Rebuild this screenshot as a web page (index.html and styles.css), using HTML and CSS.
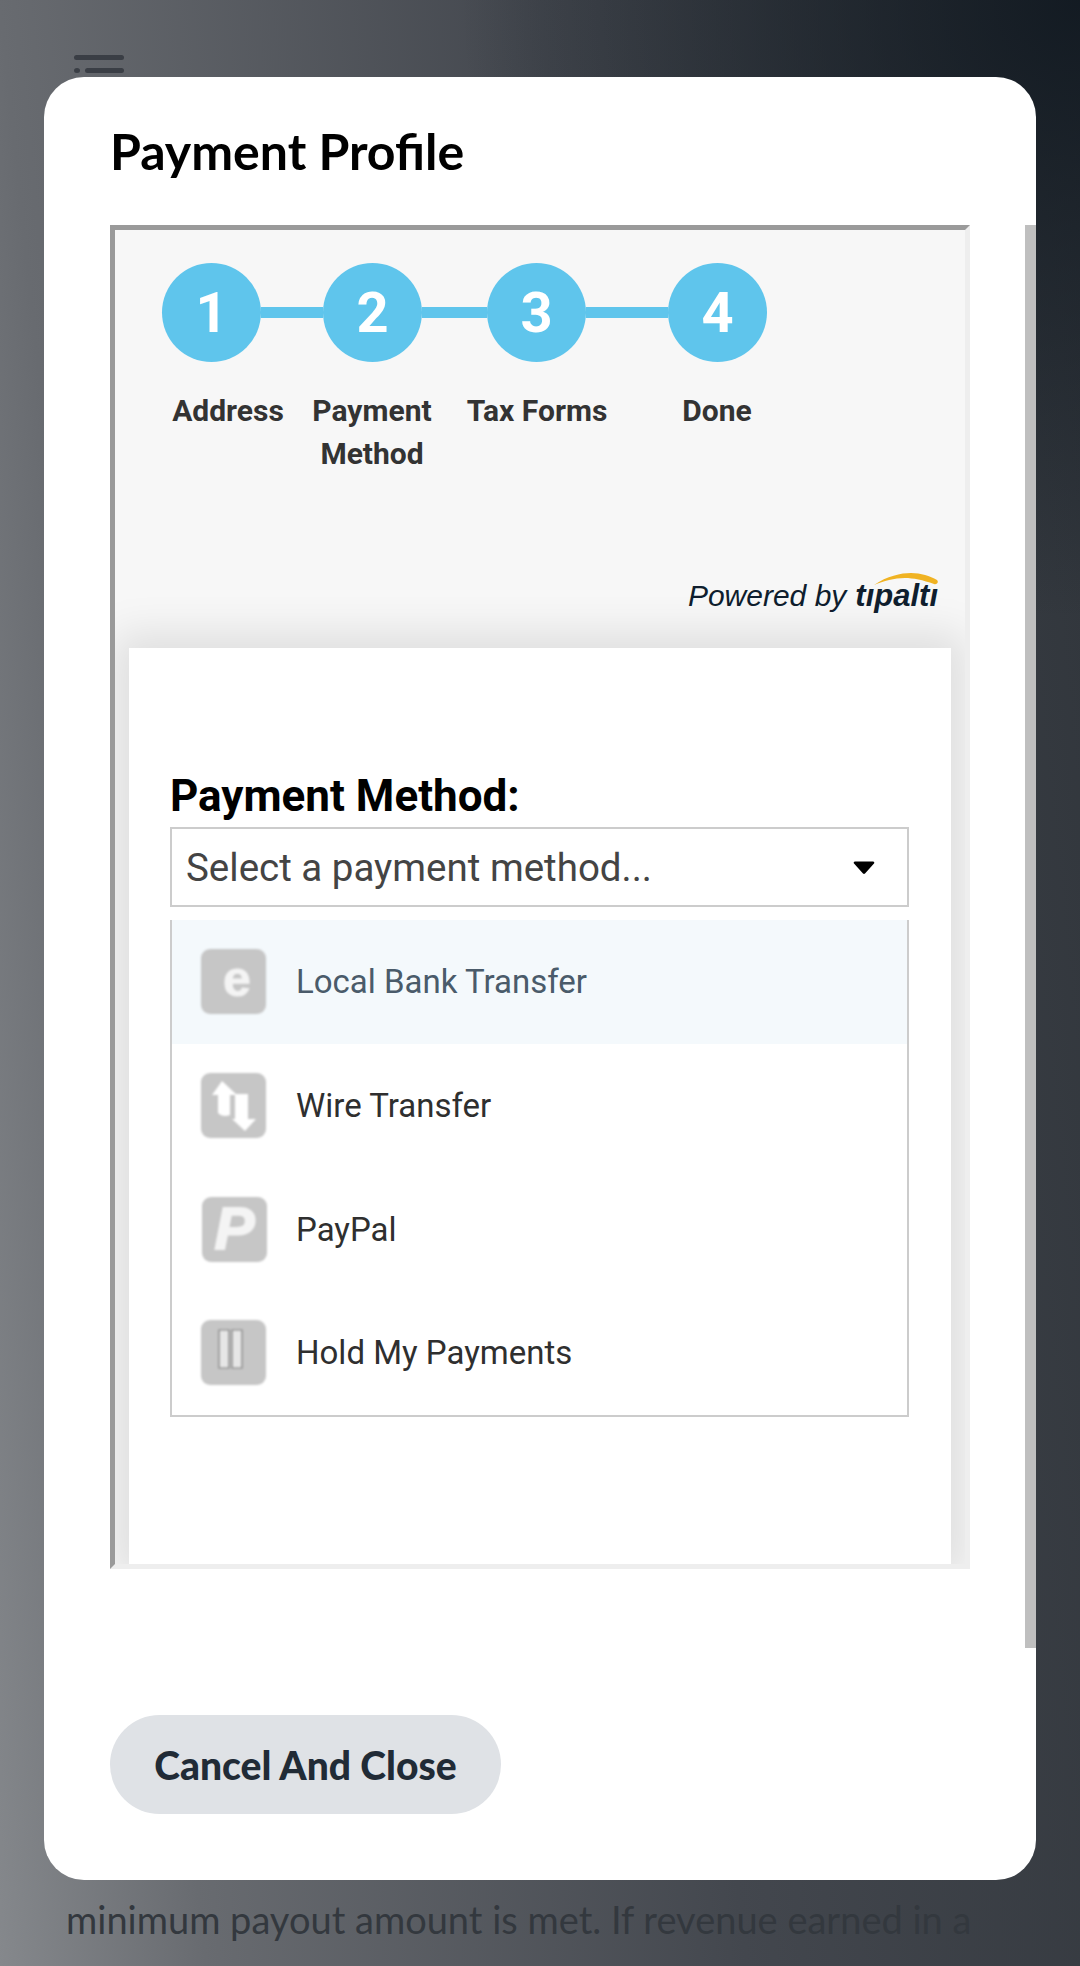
FILE: index.html
```html
<!DOCTYPE html>
<html lang="en">
<head>
  <meta charset="UTF-8">
  <title>Payment Profile</title>
  <link rel="stylesheet" href="styles.css">
</head>
<body>

<div class="page">
  <div class="menu-icon">
    <div class="menu-bar"></div>
    <div class="menu-row">
      <div class="menu-dot"></div>
      <div class="menu-bar"></div>
    </div>
  </div>
  <p class="page-text">minimum payout amount is met. If revenue earned in a</p>
</div>

<div class="modal">
  <h1 class="modal-title">Payment Profile</h1>

  <div class="frame">
    <div class="frame-head">
      <div class="step-row">
        <div class="step">1</div>
        <div class="step-line line-a"></div>
        <div class="step">2</div>
        <div class="step-line line-b"></div>
        <div class="step">3</div>
        <div class="step-line line-c"></div>
        <div class="step">4</div>
      </div>
      <div class="label-row">
        <div class="label label-a">Address</div>
        <div class="label label-b">Payment Method</div>
        <div class="label label-c">Tax Forms</div>
        <div class="label label-d">Done</div>
      </div>
      <div class="powered">
        <span class="powered-text">Powered by</span>
        <span class="brand" aria-label="tipalti">tıpaltı
          <svg class="brand-arc" viewBox="0 0 66 14"><path d="M1 13C14 4 28 1 38 1c10 0 19 3 26 7 2 2 0 5-3 4C50 8 40 6 32 6 21 6 11 9 1 13z"/></svg>
        </span>
      </div>
    </div>

    <div class="card">
      <div class="field-label">Payment Method:</div>
      <div class="select">
        <span>Select a payment method...</span>
        <svg class="select-arrow" viewBox="0 0 22 15"><path d="M2 1.500h18c1.200 0 1.700 1.300 1 2.100l-9 10c-.5.6-1.500.6-2 0l-9-10C.3 2.800.8 1.500 2 1.500z"/></svg>
      </div>
      <div class="options">
        <div class="option hover">
          <div class="method-icon"><span class="icon-letter icon-e">e</span></div>
          <span>Local Bank Transfer</span>
        </div>
        <div class="option">
          <div class="method-icon">
            <svg viewBox="0 0 65 65"><path d="M21 8l15 14h-7v20c-5 2-9 1-12-2V22h-6z M34 21h13v25h8L44 58 31 46h3z" fill="#fff"/></svg>
          </div>
          <span>Wire Transfer</span>
        </div>
        <div class="option">
          <div class="method-icon icon-shift"><span class="icon-letter icon-p">P</span></div>
          <span>PayPal</span>
        </div>
        <div class="option">
          <div class="method-icon">
            <svg viewBox="0 0 65 65"><path d="M18 10h10v38H18z M31 10h10v38H31z" fill="#e6e6e6" stroke="#808080" stroke-width="1.200"/></svg>
          </div>
          <span>Hold My Payments</span>
        </div>
      </div>
    </div>
  </div>

  <div class="scrollbar"></div>

  <button class="cancel-btn">Cancel And Close</button>
</div>

</body>
</html>
```

FILE: styles.css
```css
* {
  box-sizing: border-box;
}

body {
  margin: 0;
  width: 1080px;
  height: 1966px;
  overflow: hidden;
  position: relative;
  font-family: Roboto, sans-serif;
}

/* page behind the dialog */
.page {
  height: 100%;
  display: flex;
  flex-direction: column;
  justify-content: space-between;
  padding: 55px 0 0 66px;
  background:
    radial-gradient(circle at 100% 0, rgba(16, 24, 32, 0.9) 0, rgba(16, 24, 32, 0) 620px),
    linear-gradient(84deg, #85888c 0%, #686b70 16%, #43474e 58%, #30353b 100%);
}

.menu-icon {
  width: 50px;
  margin-left: 8px;
}

.menu-bar {
  height: 5px;
  flex: 1;
  border-radius: 3px;
  background-color: #3a3e45;
}

.menu-row {
  display: flex;
  gap: 5px;
  margin-top: 8px;
}

.menu-dot {
  width: 6px;
  height: 5px;
  border-radius: 50%;
  background-color: #3a3e45;
}

.page-text {
  margin: 0 0 22px;
  font-family: Lato, sans-serif;
  font-size: 38px;
  line-height: 50px;
  color: #33383e;
  white-space: nowrap;
}

/* dialog */
.modal {
  position: absolute;
  left: 44px;
  top: 77px;
  width: 992px;
  height: 1803px;
  padding: 0 66px;
  background-color: #fff;
  border-radius: 40px;
}

.modal-title {
  margin: 0;
  height: 148px;
  padding-top: 40px;
  font-family: Lato, sans-serif;
  font-size: 50px;
  line-height: 68px;
  font-weight: 700;
  color: #000;
}

.scrollbar {
  position: absolute;
  right: 0;
  top: 148px;
  width: 11px;
  height: 1423px;
  background-color: #bfbfbf;
}

.frame {
  width: 860px;
  height: 1344px;
  display: flex;
  flex-direction: column;
  overflow: hidden;
  border: 5px solid;
  border-color: #9a9a9a #eee #eee #9a9a9a;
  background-color: #f7f7f7;
}

.frame-head {
  height: 418px;
  flex: none;
  padding-top: 33px;
}

.step-row {
  display: flex;
  align-items: center;
  padding-left: 47px;
}

.step {
  width: 99px;
  height: 99px;
  flex: none;
  display: flex;
  justify-content: center;
  align-items: center;
  border-radius: 50%;
  background-color: #5fc5ec;
  color: #fff;
  font-size: 56px;
  font-weight: 700;
}

.step-line {
  height: 11px;
  margin-top: -1px;
  background-color: #5fc5ec;
}

.line-a { width: 62px; }
.line-b { width: 65px; }
.line-c { width: 82px; }

.label-row {
  display: flex;
  margin-top: 27px;
  padding-left: 47px;
}

.label {
  text-align: center;
  font-size: 30px;
  line-height: 43px;
  font-weight: 700;
  color: #333;
}

.label-a { width: 132px; }
.label-b { width: 156px; padding: 0 10px; }
.label-c { width: 174px; }
.label-d { width: 186px; }

.powered {
  display: flex;
  justify-content: flex-end;
  align-items: baseline;
  gap: 9px;
  margin-top: 103px;
  padding-right: 27px;
  font-family: "Liberation Sans", sans-serif;
  font-style: italic;
  color: #0f1e2e;
}

.powered-text {
  font-size: 30px;
  line-height: 36px;
}

.brand {
  position: relative;
  font-size: 31px;
  line-height: 36px;
  font-weight: 700;
}

.brand-arc {
  position: absolute;
  right: -1px;
  top: -6px;
  width: 66px;
  height: 14px;
  fill: #f0b323;
}

.card {
  flex: 1;
  margin: 0 14px;
  padding: 118px 42px 0 41px;
  background-color: #fff;
  box-shadow: 0 0 40px 14px rgba(0, 0, 0, 0.1);
}

.field-label {
  font-size: 44px;
  line-height: 61px;
  font-weight: 700;
  color: #000;
}

.select {
  height: 80px;
  display: flex;
  justify-content: space-between;
  align-items: center;
  padding: 0 32px 0 14px;
  border: 2px solid #ccc;
  font-size: 38.5px;
  color: #444;
}

.select-arrow {
  width: 22px;
  height: 15px;
  fill: #000;
}

.options {
  margin-top: 13px;
  border: 2px solid #ccc;
  border-top: none;
}

.option {
  height: 123.7px;
  display: flex;
  align-items: center;
  gap: 30px;
  padding-left: 29px;
  font-size: 33px;
  color: #2f2f2f;
}

.option.hover {
  background-color: #f4f9fc;
  color: #4a5b6a;
}

.method-icon {
  width: 65px;
  height: 65px;
  display: flex;
  justify-content: center;
  align-items: center;
  border-radius: 9px;
  background-color: #c6c6c6;
  filter: blur(1px);
}

.method-icon svg {
  width: 65px;
  height: 65px;
}

.icon-shift {
  margin-left: 1px;
  margin-right: -1px;
}

.icon-letter {
  font-family: "Liberation Sans", sans-serif;
  line-height: 1;
  font-weight: 700;
  color: #f4f4f4;
}

.icon-e {
  font-size: 50px;
  padding-left: 7px;
  margin-top: -6px;
  -webkit-text-stroke: 1px #f4f4f4;
}

.icon-p {
  font-size: 60px;
  font-style: italic;
  -webkit-text-stroke: 2px #f4f4f4;
}

.cancel-btn {
  display: block;
  width: 391px;
  height: 99px;
  margin-top: 146px;
  border: none;
  border-radius: 50px;
  background-color: #dfe2e6;
  color: #212b36;
  font-family: Lato, sans-serif;
  font-size: 39px;
  font-weight: 900;
}
```
